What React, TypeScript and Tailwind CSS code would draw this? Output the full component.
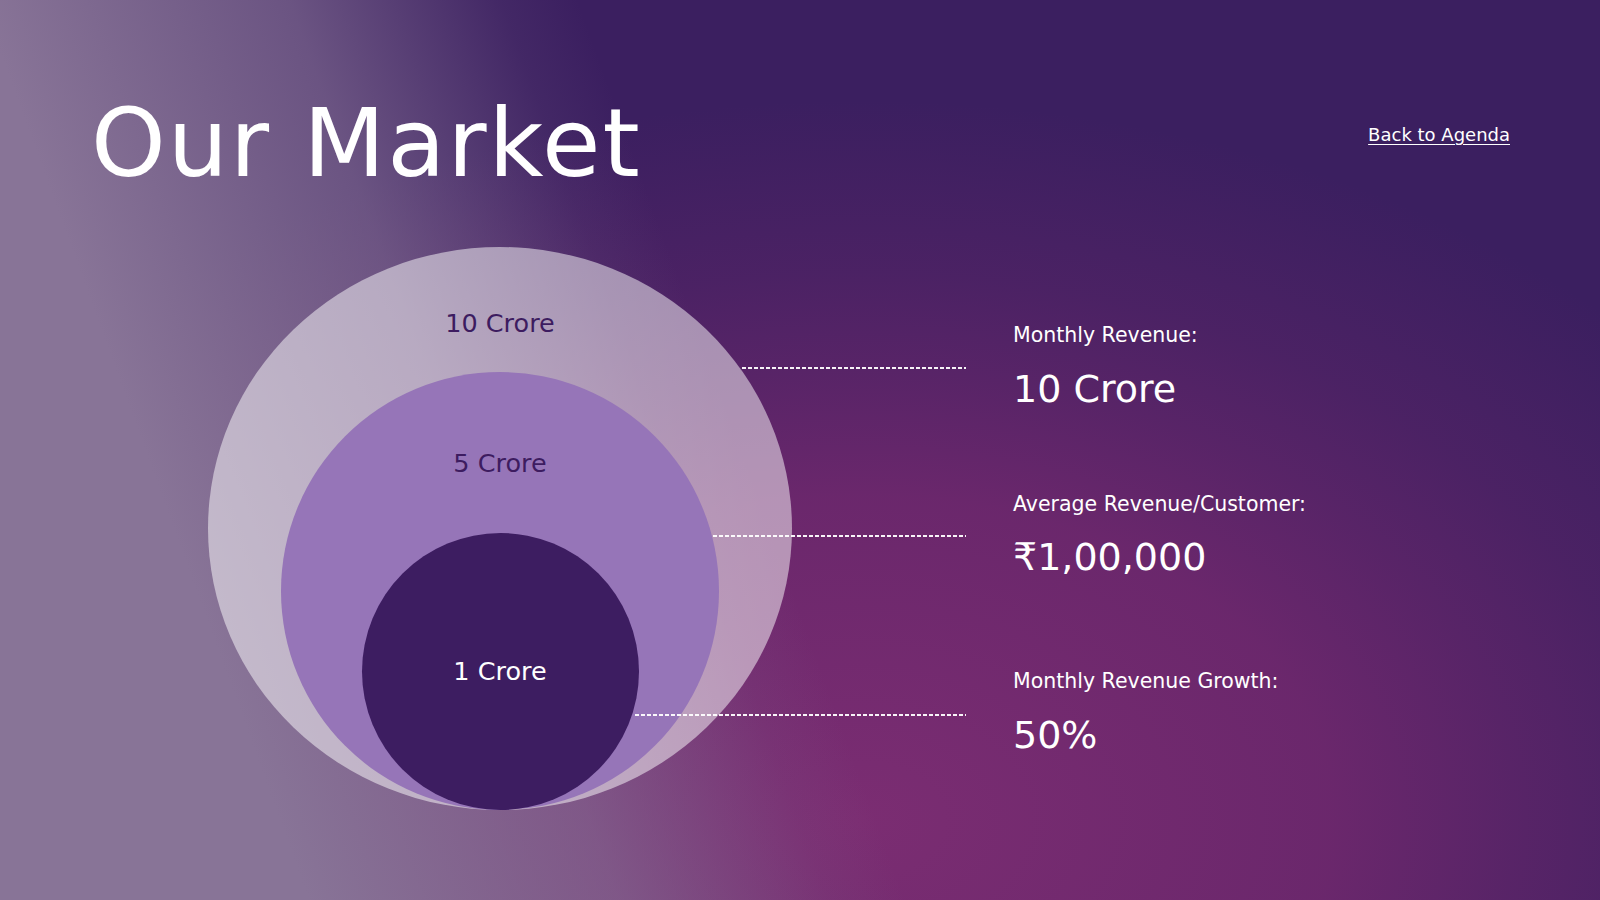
const stats = [
  { label: 'Monthly Revenue:', value: '10 Crore', gap: 'mt-[78px]' },
  { label: 'Average Revenue/Customer:', value: '₹1,00,000', gap: 'mt-[86px]' },
  { label: 'Monthly Revenue Growth:', value: '50%', gap: 'mt-[95px]' },
];

function Dash({ className }: { className: string }) {
  return (
    <div
      className={`absolute h-[1.5px] bg-[repeating-linear-gradient(90deg,rgba(255,255,255,0.95)_0_4px,transparent_4px_6px)] ${className}`}
    />
  );
}

function MarketCircles() {
  return (
    <div className="relative ml-[208px] w-[584px] h-[563px] shrink-0">
      {/* outer ring: 10 Crore */}
      <div className="w-full h-full rounded-[50%] bg-white/50 flex flex-col items-center pt-[64px]">
        <span className="text-[25.5px] leading-none text-[#3d1c60]">10 Crore</span>
        {/* middle: 5 Crore */}
        <div className="mt-auto w-[438px] h-[438px] rounded-full bg-[#9675b8] flex flex-col items-center pt-[79px]">
          <span className="text-[25.5px] leading-none text-[#3d1c60]">5 Crore</span>
          {/* inner: 1 Crore */}
          <div className="mt-auto w-[277px] h-[277px] rounded-full bg-[#3d1d61] flex items-center justify-center">
            <span className="text-[25.5px] leading-none text-white">1 Crore</span>
          </div>
        </div>
      </div>

      <Dash className="top-[120px] left-[534px] w-[224px]" />
      <Dash className="top-[288px] left-[505px] w-[253px]" />
      <Dash className="top-[467px] left-[427px] w-[331px]" />
    </div>
  );
}

export default function App() {
  return (
    <div className="w-[1600px] h-[900px] overflow-hidden flex flex-col text-white font-['DejaVu_Sans','Liberation_Sans',sans-serif] bg-[#3b1f60] bg-[image:linear-gradient(70deg,rgba(136,116,151,1)_0%,rgba(136,116,151,1)_16%,rgba(136,116,151,0.62)_32%,rgba(136,116,151,0.1)_43%,rgba(136,116,151,0)_47%),radial-gradient(1050px_720px_at_860px_820px,rgba(123,45,114,1)_0%,rgba(123,42,112,0.74)_45%,rgba(123,42,112,0.46)_62%,rgba(123,42,112,0.25)_76%,rgba(123,42,112,0)_100%)]">
      <header className="flex items-start justify-between pl-[91px] pr-[90px] pt-[96px]">
        <h1 className="text-[95px] leading-none tracking-[2px] font-normal">Our Market</h1>
        <a href="#" className="mt-[30px] text-[18px] leading-none underline underline-offset-[3px]">
          Back to Agenda
        </a>
      </header>

      <main className="flex mt-[56px]">
        <MarketCircles />

        <div className="ml-[221px] flex flex-col">
          {stats.map((s) => (
            <div key={s.label} className={`flex flex-col ${s.gap}`}>
              <p className="text-[20.5px] leading-none">{s.label}</p>
              <p className="mt-[24px] text-[38px] leading-none">{s.value}</p>
            </div>
          ))}
        </div>
      </main>
    </div>
  );
}
